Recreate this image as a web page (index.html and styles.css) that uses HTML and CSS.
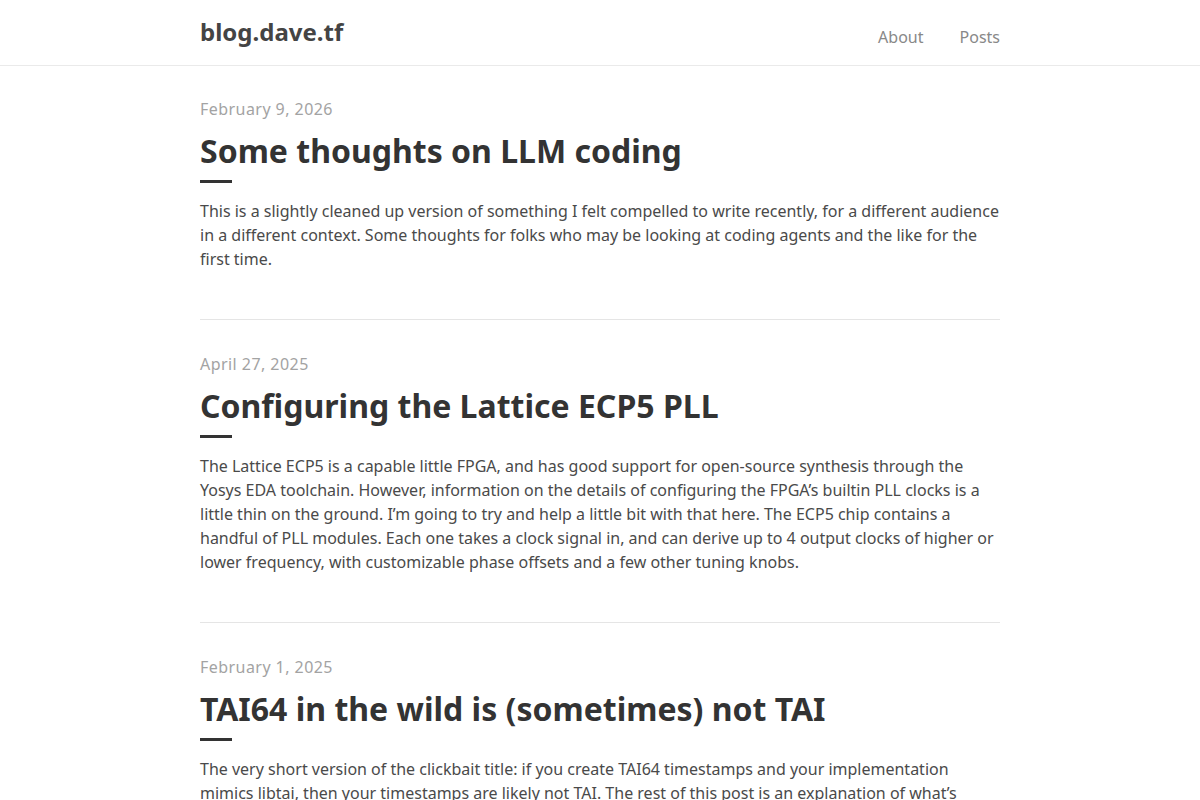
FILE: index.html
```html
<!DOCTYPE html>
<html lang="en">
<head>
<meta charset="utf-8">
<title>blog.dave.tf</title>
<link rel="stylesheet" href="styles.css">
</head>
<body>
<header class="site-header">
  <div class="wrap header-inner">
    <a class="logo" href="#">blog.dave.tf</a>
    <nav class="nav">
      <a href="#">About</a>
      <a href="#">Posts</a>
    </nav>
  </div>
</header>
<main class="wrap">
  <article class="post">
    <div class="date">February 9, 2026</div>
    <h2 class="title">Some thoughts on LLM coding</h2>
    <div class="bar"></div>
    <p class="summary">This is a slightly cleaned up version of something I felt compelled to write recently, for a different audience in a different context. Some thoughts for folks who may be looking at coding agents and the like for the first time.</p>
  </article>
  <article class="post">
    <div class="date">April 27, 2025</div>
    <h2 class="title">Configuring the Lattice ECP5 PLL</h2>
    <div class="bar"></div>
    <p class="summary">The Lattice ECP5 is a capable little FPGA, and has good support for open-source synthesis through the Yosys EDA toolchain. However, information on the details of configuring the FPGA’s builtin PLL clocks is a little thin on the ground. I’m going to try and help a little bit with that here. The ECP5 chip contains a handful of PLL modules. Each one takes a clock signal in, and can derive up to 4 output clocks of higher or lower frequency, with customizable phase offsets and a few other tuning knobs.</p>
  </article>
  <article class="post">
    <div class="date">February 1, 2025</div>
    <h2 class="title">TAI64 in the wild is (sometimes) not TAI</h2>
    <div class="bar"></div>
    <p class="summary">The very short version of the clickbait title: if you create TAI64 timestamps and your implementation mimics libtai, then your timestamps are likely not TAI. The rest of this post is an explanation of what’s going on, and why it matters.</p>
  </article>
</main>
</body>
</html>
```

FILE: styles.css
```css
html, body {
  margin: 0;
  padding: 0;
  background: #fff;
}
body {
  font-family: "Noto Sans", "Open Sans", sans-serif;
  color: #444;
  font-size: 16px;
  line-height: 24px;
}
a {
  text-decoration: none;
  color: inherit;
}
.wrap {
  width: 800px;
  margin: 0 auto;
}
.site-header {
  height: 65px;
  border-bottom: 1px solid #eaeaea;
}
.header-inner {
  display: flex;
  justify-content: space-between;
  align-items: center;
  height: 65px;
}
.logo {
  font-size: 24px;
  font-weight: 700;
  color: #444;
  position: relative;
  top: 1px;
  margin-top: -4px;
}
.nav {
  display: flex;
  gap: 36px;
  margin-top: 8px;
}
.nav a {
  color: #888;
  font-size: 16px;
}
.post {
  padding: 31px 0 48px;
  border-bottom: 1px solid #e5e5e5;
}
.post + .post {
  padding-top: 32px;
}
.date {
  color: #a3a3a3;
  font-size: 16px;
  line-height: 24px;
  letter-spacing: 0.45px;
}
.title {
  margin: 9px 0 0;
  font-size: 32px;
  line-height: 42px;
  font-weight: 700;
  color: #333;
}
.bar {
  width: 32px;
  height: 3px;
  background: #333;
  margin-top: 8px;
}
.summary {
  margin: 16px 0 0;
  color: #4a4a4a;
}
```
